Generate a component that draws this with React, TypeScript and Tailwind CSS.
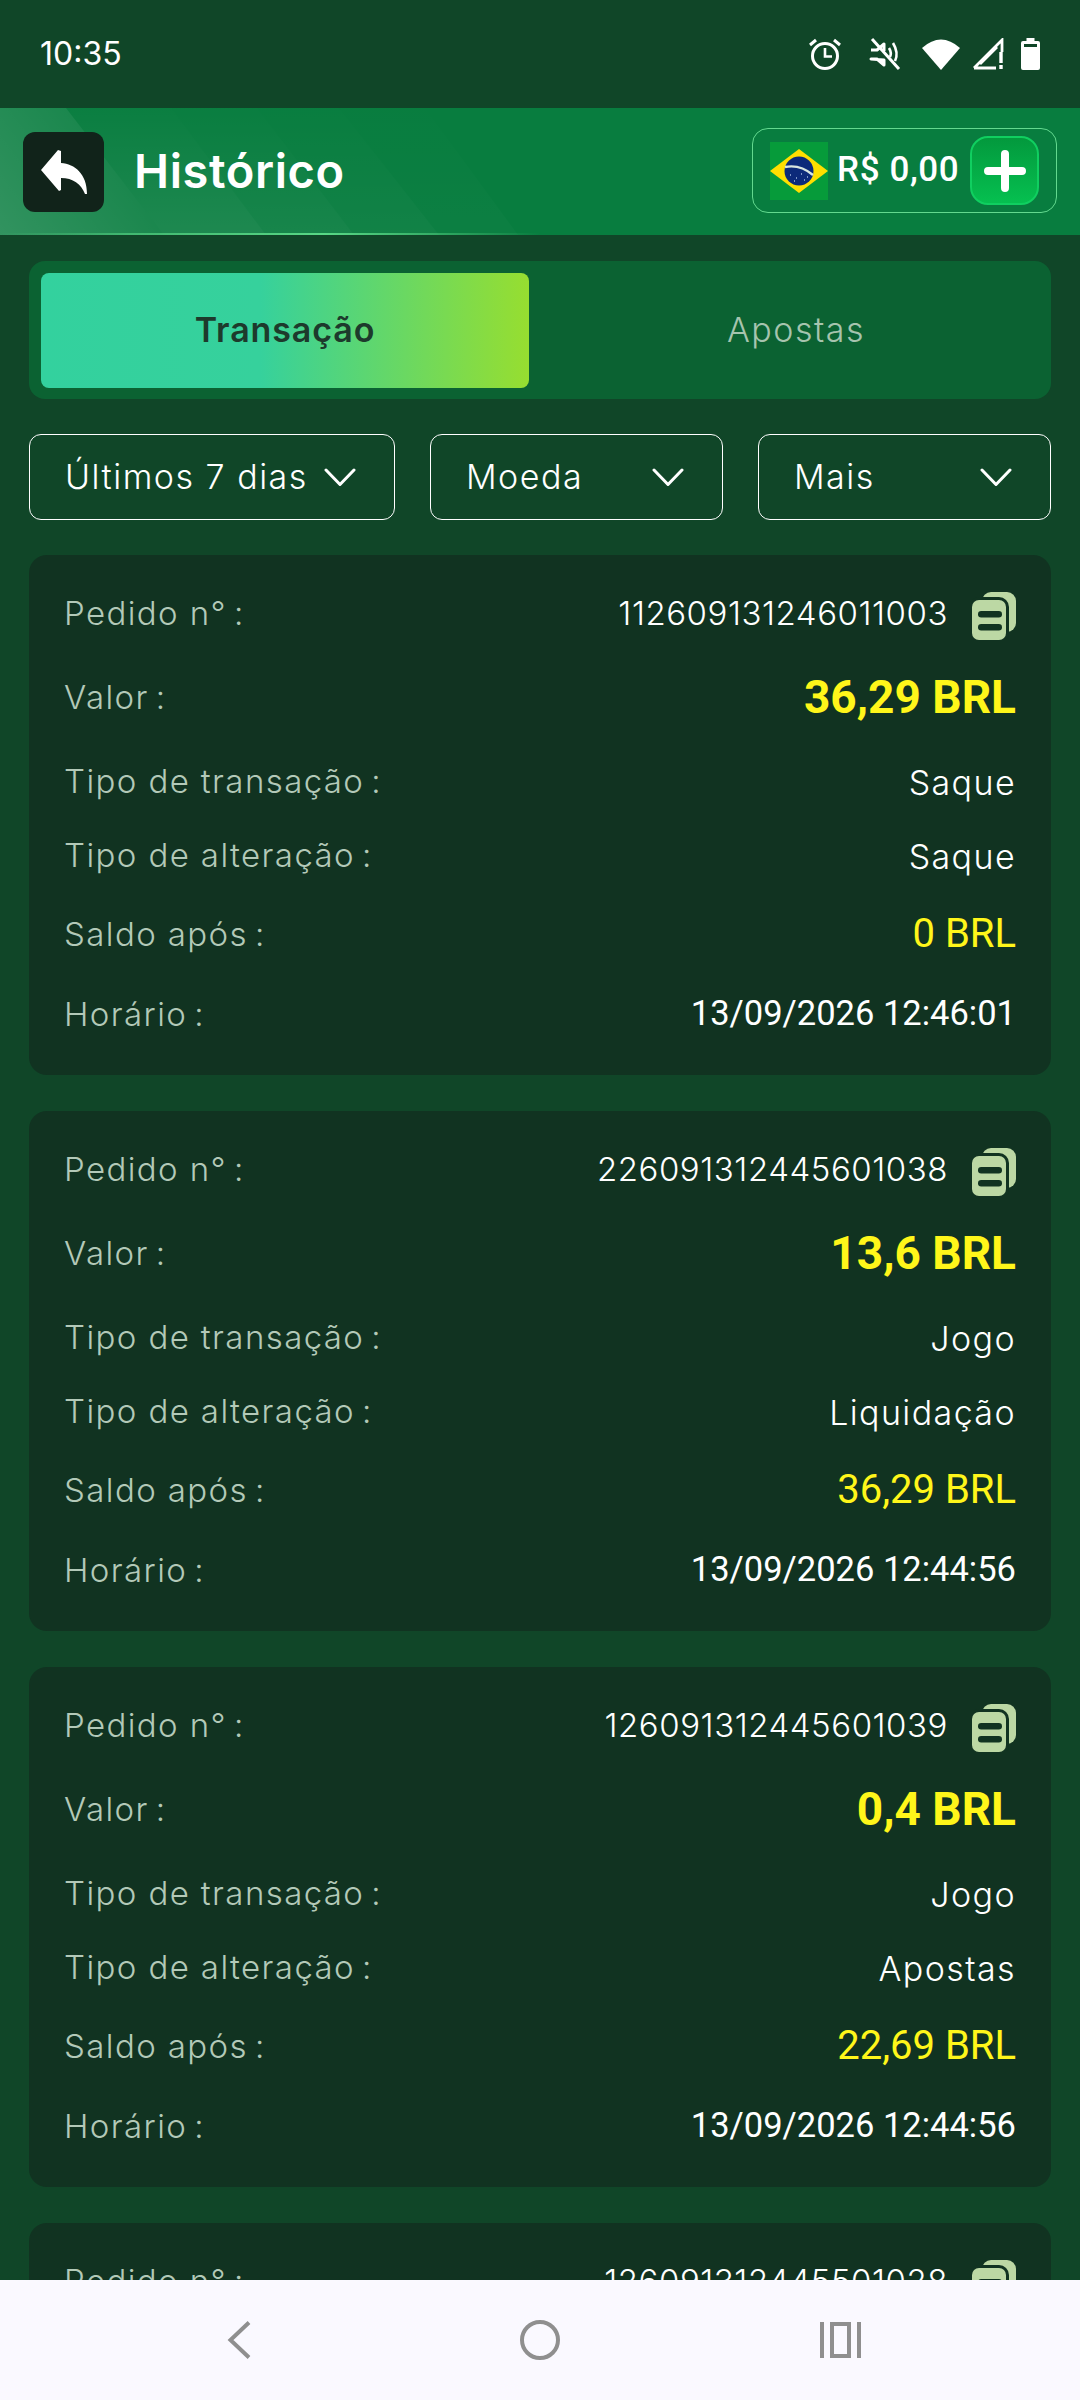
import React from "react";

const sans = "font-['Inter','Liberation_Sans',sans-serif]";
const roboto = "font-['Roboto','Liberation_Sans',sans-serif]";

type Tx = { id: string; value: string; type: string; change: string; balance: string; time: string };

const txs: Tx[] = [
  { id: "112609131246011003", value: "36,29 BRL", type: "Saque", change: "Saque", balance: "0 BRL", time: "13/09/2026 12:46:01" },
  { id: "226091312445601038", value: "13,6 BRL", type: "Jogo", change: "Liquidação", balance: "36,29 BRL", time: "13/09/2026 12:44:56" },
  { id: "126091312445601039", value: "0,4 BRL", type: "Jogo", change: "Apostas", balance: "22,69 BRL", time: "13/09/2026 12:44:56" },
  { id: "126091312445501028", value: "1,2 BRL", type: "Jogo", change: "Apostas", balance: "22,29 BRL", time: "13/09/2026 12:44:55" },
];

function CopyIcon() {
  return (
    <svg width="44" height="48" viewBox="0 0 44 48" className="mt-[6px] shrink-0">
      <rect x="10" y="0" width="34" height="40" rx="9" fill="#bcd8a4" />
      <rect x="-3" y="5" width="40" height="46" rx="10" fill="#113321" />
      <rect x="0" y="8" width="34" height="40" rx="7" fill="#bcd8a4" />
      <rect x="6" y="19" width="24" height="6.5" rx="3.2" fill="#113321" />
      <rect x="6" y="32" width="24" height="6.5" rx="3.2" fill="#113321" />
    </svg>
  );
}

function Row({ label, h, children }: { label: string; h: string; children: React.ReactNode }) {
  return (
    <div className={`flex items-center justify-between ${h}`}>
      <span className={`${sans} pt-[2px] text-[33px] font-light tracking-[1.4px] text-[#b3c9b8]`}>
        {label}
        <span className="ml-[7px]">:</span>
      </span>
      {children}
    </div>
  );
}

const whiteText = `${sans} pt-[2px] text-[34px] font-light tracking-[1.4px] text-white`;

function Card({ t }: { t: Tx }) {
  return (
    <div className="h-[520px] shrink-0 rounded-[18px] bg-[#113321] px-[35px] pt-[18px]">
      <Row label="Pedido n°" h="h-[80px]">
        <div className="flex items-center gap-[24px]">
          <span className={`${sans} pt-[2px] text-[33px] font-light tracking-[0.55px] text-white`}>{t.id}</span>
          <CopyIcon />
        </div>
      </Row>
      <Row label="Valor" h="h-[88px]">
        <span className={`${roboto} text-[46px] font-bold text-[#fff61a]`}>{t.value}</span>
      </Row>
      <Row label="Tipo de transação" h="h-[80px]">
        <span className={whiteText}>{t.type}</span>
      </Row>
      <Row label="Tipo de alteração" h="h-[68px]">
        <span className={whiteText}>{t.change}</span>
      </Row>
      <Row label="Saldo após" h="h-[90px]">
        <span className={`${roboto} text-[40px] text-[#fff61a]`}>{t.balance}</span>
      </Row>
      <Row label="Horário" h="h-[70px]">
        <span className={`${roboto} text-[34.5px] text-white`}>{t.time}</span>
      </Row>
    </div>
  );
}

function Chevron() {
  return (
    <svg width="32" height="19" viewBox="0 0 32 19" fill="none" className="shrink-0">
      <path d="M2 2 L16 16.5 L30 2" stroke="#fff" strokeWidth="3" strokeLinecap="round" strokeLinejoin="round" />
    </svg>
  );
}

function Filter({ label, w }: { label: string; w: string }) {
  return (
    <div className={`flex h-[86px] ${w} items-center justify-between rounded-[12px] border border-white pl-[35px] pr-[38px]`}>
      <span className={`${sans} pb-[2px] text-[34px] font-light tracking-[1.5px] text-white`}>{label}</span>
      <Chevron />
    </div>
  );
}

function StatusIcons() {
  return (
    <div className="flex items-center">
      <svg width="34" height="32" viewBox="0 0 34 32" fill="none" stroke="#fff" strokeWidth="3">
        <circle cx="17" cy="18" r="12.5" />
        <path d="M17 10 V18.5 H24" strokeWidth="2.6" />
        <path d="M2 7 L8 2 M32 7 L26 2" strokeWidth="3" />
      </svg>
      <svg width="32" height="32" viewBox="0 0 32 32" fill="none" stroke="#fff" strokeWidth="3" className="ml-[27px]">
        <path d="M2 12 H8 L15 6 V13 M15 22 V27 L8 21 H2 Z" strokeLinejoin="round" />
        <path d="M3 1 L30 31" />
        <path d="M20 10 Q23 15 21 19 M24 5 Q30 15 26 23" strokeWidth="2.6" />
      </svg>
      <svg width="38" height="32" viewBox="0 0 38 32" className="ml-[21px]">
        <path d="M0 10 Q19 -7 38 10 L19 32 Z" fill="#fff" />
      </svg>
      <svg width="32" height="32" viewBox="0 0 32 32" fill="none" className="ml-[12px]">
        <path d="M2 30 L30 2 V14 M25 9 L8 26 M2 30 H24" stroke="#fff" strokeWidth="2.8" />
        <path d="M29 14 V25 M29 27 V31" stroke="#fff" strokeWidth="3.4" />
      </svg>
      <svg width="19" height="32" viewBox="0 0 19 32" className="ml-[17px]">
        <path d="M5.5 0 H13.5 V3 H17 Q19 3 19 5 V30 Q19 32 17 32 H2 Q0 32 0 30 V5 Q0 3 2 3 H5.5 Z M3 6 V9 H16 V6 Z" fill="#fff" fillRule="evenodd" />
      </svg>
    </div>
  );
}

function Flag() {
  return (
    <svg width="58" height="58" viewBox="0 0 58 58" className="shrink-0">
      <rect width="58" height="58" fill="#069b3a" />
      <path d="M29 7 L58 29 L29 51 L0 29 Z" fill="#ffdf00" />
      <circle cx="29" cy="29" r="14.5" fill="#0c2a7a" />
      <path d="M15 25 Q30 22 43 33" stroke="#d8e6e0" strokeWidth="2.4" fill="none" />
      <path d="M20 33 h1 M26 36 h1 M31 32 h1 M34 38 h1 M24 39 h1 M37 35 h1" stroke="#9fb6dd" strokeWidth="1.4" />
    </svg>
  );
}

export default function App() {
  return (
    <div className="flex h-[2400px] w-[1080px] flex-col overflow-hidden bg-[#104628]">
      <div className="flex h-[108px] shrink-0 items-center justify-between pl-[40px] pr-[40px]">
        <span className={`${sans} text-[32px] font-normal text-white`}>10:35</span>
        <StatusIcons />
      </div>

      <div className="relative flex h-[127px] shrink-0 items-center justify-between overflow-hidden bg-[#087d3f] pl-[23px] pr-[23px]">
        <svg className="absolute inset-0" width="1080" height="127" viewBox="0 0 1080 127">
          <defs>
            <linearGradient id="hl" gradientUnits="userSpaceOnUse" x1="0" y1="127" x2="170" y2="0">
              <stop offset="0" stopColor="#fff" stopOpacity="0.17" />
              <stop offset="1" stopColor="#fff" stopOpacity="0.02" />
            </linearGradient>
            <linearGradient id="h2" gradientUnits="userSpaceOnUse" x1="0" y1="127" x2="0" y2="0">
              <stop offset="0" stopColor="#fff" stopOpacity="0.09" />
              <stop offset="1" stopColor="#fff" stopOpacity="0.01" />
            </linearGradient>
            <linearGradient id="ln" x1="0" y1="0" x2="1" y2="0">
              <stop offset="0" stopColor="#59d886" stopOpacity="0" />
              <stop offset="0.12" stopColor="#59d886" stopOpacity="0.6" />
              <stop offset="0.3" stopColor="#59d886" />
              <stop offset="0.5" stopColor="#59d886" stopOpacity="0" />
            </linearGradient>
          </defs>
          <path d="M0 0 H66 L164 127 H0 Z" fill="url(#hl)" />
          <path d="M66 0 H171 L266 127 H164 Z" fill="url(#h2)" />
          <path d="M171 0 H257 L354 127 H266 Z" fill="url(#h2)" fillOpacity="0.7" />
          <path d="M257 0 H339 L439 127 H354 Z" fill="url(#h2)" fillOpacity="0.45" />
          <path d="M339 0 H425 L518 127 H439 Z" fill="url(#h2)" fillOpacity="0.2" />
          <rect x="0" y="125" width="1080" height="2" fill="url(#ln)" />
        </svg>
        <div className="relative flex items-center">
          <div className="flex h-[80px] w-[81px] items-center justify-center rounded-[12px] bg-[#11231a]">
            <svg width="46" height="44" viewBox="0 0 46 44">
              <path d="M17 0 L20 1 V13 C34 14 46 24 46 44 H44 C40 34 32 28 20 28 V40 L18 41 L0 20 Z" fill="#fff" />
            </svg>
          </div>
          <span className={`${sans} ml-[30px] text-[47px] font-semibold tracking-[0.6px] text-white`}>Histórico</span>
        </div>
        <div className="relative mb-[2px] flex h-[85px] w-[305px] items-center rounded-[16px] border border-[#63d98f] pl-[17px]">
          <Flag />
          <span className={`${roboto} ml-[9px] w-[124px] text-[35px] font-medium tracking-[0.6px] text-white`}>R$ 0,00</span>
          <div className="ml-[9px] flex h-[69px] w-[69px] shrink-0 items-center justify-center rounded-[18px] border-2 border-[#10cf60] bg-gradient-to-b from-[#03993d] to-[#06c050]">
            <svg width="42" height="42" viewBox="0 0 42 42">
              <path d="M21 4 V38 M4 21 H38" stroke="#fff" strokeWidth="8" strokeLinecap="round" />
            </svg>
          </div>
        </div>
      </div>

      <div className="min-h-0 flex-1 overflow-hidden px-[29px] pt-[26px]">
        <div className="flex h-[138px] items-center rounded-[16px] bg-[#0b6232] px-[12px]">
          <div className="flex h-[115px] w-[488px] items-center justify-center rounded-[8px] bg-[linear-gradient(90deg,#33d19e_0%,#36d19c_45%,#97de30_100%)]">
            <span className={`${sans} pb-[2px] text-[34px] font-semibold tracking-[0.9px] text-[#1d3a2c]`}>Transação</span>
          </div>
          <div className="flex flex-1 items-center justify-center pl-[24px]">
            <span className={`${sans} pb-[2px] text-[34px] font-light tracking-[1.5px] text-[#a6c4ae]`}>Apostas</span>
          </div>
        </div>

        <div className="mt-[35px] flex h-[86px] justify-between">
          <Filter label="Últimos 7 dias" w="w-[366px]" />
          <Filter label="Moeda" w="w-[293px]" />
          <Filter label="Mais" w="w-[293px]" />
        </div>

        <div className="mt-[35px] flex flex-col gap-[36px]">
          {txs.map((t) => (
            <Card key={t.id} t={t} />
          ))}
        </div>
      </div>

      <div className="flex h-[120px] shrink-0 items-center bg-[#faf9ff] pl-[227px]">
        <svg width="24" height="38" viewBox="0 0 24 38" fill="none">
          <path d="M22 1.5 L3.5 19 L22 36.5" stroke="#8f8f8f" strokeWidth="4" />
        </svg>
        <svg width="40" height="40" viewBox="0 0 40 40" fill="none" className="ml-[269px]">
          <circle cx="20" cy="20" r="18" stroke="#8f8f8f" strokeWidth="4" />
        </svg>
        <svg width="41" height="36" viewBox="0 0 41 36" fill="none" className="ml-[260px]">
          <path d="M2 0 V36 M39 0 V36" stroke="#8f8f8f" strokeWidth="4" />
          <rect x="12" y="2" width="17" height="32" stroke="#8f8f8f" strokeWidth="4" />
        </svg>
      </div>
    </div>
  );
}
